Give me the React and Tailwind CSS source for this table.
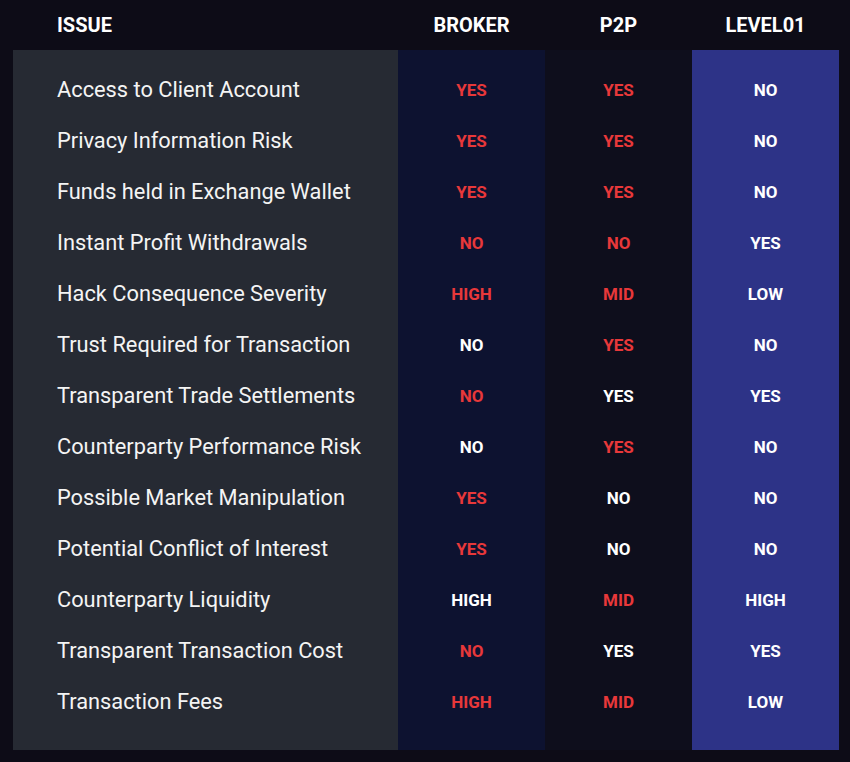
const COLS = ["BROKER", "P2P", "LEVEL01"];

const ROWS = [
  ["Access to Client Account", "YES", "YES", "NO"],
  ["Privacy Information Risk", "YES", "YES", "NO"],
  ["Funds held in Exchange Wallet", "YES", "YES", "NO"],
  ["Instant Profit Withdrawals", "NO", "NO", "YES"],
  ["Hack Consequence Severity", "HIGH", "MID", "LOW"],
  ["Trust Required for Transaction", "NO", "YES", "NO"],
  ["Transparent Trade Settlements", "NO", "YES", "YES"],
  ["Counterparty Performance Risk", "NO", "YES", "NO"],
  ["Possible Market Manipulation", "YES", "NO", "NO"],
  ["Potential Conflict of Interest", "YES", "NO", "NO"],
  ["Counterparty Liquidity", "HIGH", "MID", "HIGH"],
  ["Transparent Transaction Cost", "NO", "YES", "YES"],
  ["Transaction Fees", "HIGH", "MID", "LOW"],
];

// white = good, red = bad; level01 column is always white
const WHITE = {
  0: ["Trust Required for Transaction", "Counterparty Performance Risk", "Counterparty Liquidity"],
  1: ["Transparent Trade Settlements", "Possible Market Manipulation", "Potential Conflict of Interest", "Transparent Transaction Cost"],
};

const colBg = ["bg-[#0d1230]", "bg-[#0e0e1c]", "bg-[#2d3387]"];

const Cell = ({ value, white }) => (
  <div className="h-[51px] flex items-center justify-center">
    <span className={`text-[17px] font-bold ${white ? "text-white" : "text-[#e8383a]"}`}>{value}</span>
  </div>
);

export default function App() {
  return (
    <div
      className="w-[850px] h-[762px] bg-[#0d0c17] text-white"
      style={{ fontFamily: "Roboto, 'Liberation Sans', sans-serif" }}
    >
      <div className="flex h-[50px] items-center pl-[13px] pr-[11px]">
        <div className="w-[385px] pl-[44px] text-[20px] font-bold">ISSUE</div>
        {COLS.map((c) => (
          <div key={c} className="w-[147px] text-center text-[20px] font-bold">
            {c}
          </div>
        ))}
      </div>

      <div className="flex ml-[13px] h-[700px]">
        <div className="w-[385px] bg-[#262a33] pt-[15px]">
          {ROWS.map((r) => (
            <div key={r[0]} className="h-[51px] flex items-center pl-[44px] text-[21.8px] text-[#f4f4f4]">
              {r[0]}
            </div>
          ))}
        </div>
        {COLS.map((c, i) => (
          <div key={c} className={`w-[147px] pt-[15px] ${colBg[i]}`}>
            {ROWS.map((r) => (
              <Cell key={r[0]} value={r[i + 1]} white={i === 2 || (WHITE[i] || []).includes(r[0])} />
            ))}
          </div>
        ))}
      </div>
    </div>
  );
}
